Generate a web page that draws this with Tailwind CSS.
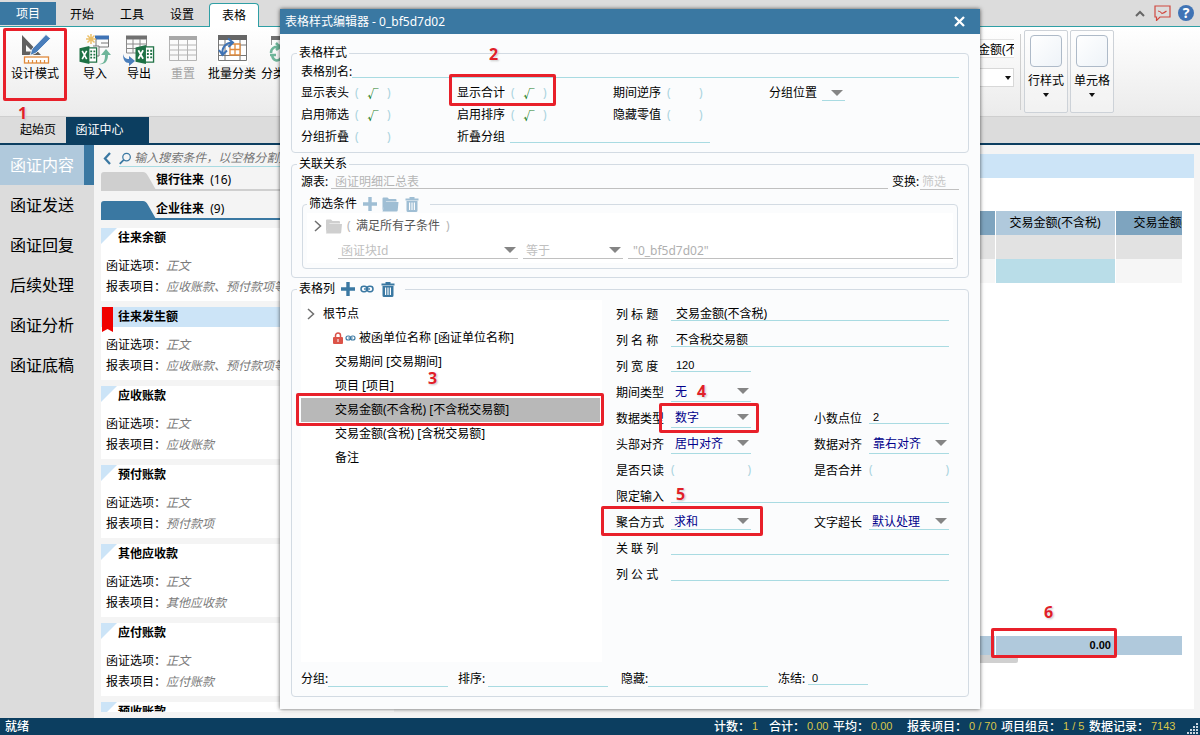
<!DOCTYPE html>
<html lang="zh-CN">
<head>
<meta charset="utf-8">
<title>表格样式编辑器</title>
<script src="https://cdn.jsdelivr.net/npm/@tailwindcss/browser@4"></script>
</head>
<body class="relative flex h-screen flex-col overflow-hidden bg-[#f4f4f4] font-['Noto_Sans','Noto_Sans_CJK_SC',sans-serif] text-xs text-black">
<svg class="hidden" xmlns="http://www.w3.org/2000/svg">
  <symbol id="plus" viewBox="0 0 14 14"><path d="M5.3 0h3.4v5.3H14v3.4H8.700V14H5.300V8.700H0V5.300h5.300z" fill="currentColor"/></symbol>
  <symbol id="folder" viewBox="0 0 16 15"><path d="M0 13.500V1.500Q0 .5 1 .5h4l1.500 1.500h6.500q1 0 1 1v1.500H3.500z M0 14.500 L3 5h13l-.8 8.500q-.1 1-1.200 1z" fill="currentColor"/></symbol>
  <symbol id="trash" viewBox="0 0 14 15"><path d="M4.500 0h5v1.500H13.500v2H.5v-2h4z" fill="currentColor"/><path d="M1.500 4h11v9.500q0 1.500-1.500 1.500H3q-1.500 0-1.500-1.500zM4 5.500v7.500h1.200V5.500zM6.400 5.500v7.500h1.200V5.500zM8.800 5.500v7.500H10V5.500z" fill="currentColor" fill-rule="evenodd"/></symbol>
  <symbol id="link" viewBox="0 0 14 8"><g fill="none" stroke="currentColor" stroke-width="1.500"><rect x="1" y="1.300" width="6" height="5.400" rx="2.700"/><rect x="7" y="1.300" width="6" height="5.400" rx="2.700"/></g><path d="M4 4h6" stroke="currentColor" stroke-width="1.400"/></symbol>
  <symbol id="tri" viewBox="0 0 12 6"><path d="M0 0h12L6 6z" fill="#858585"/></symbol>
  <symbol id="caret" viewBox="0 0 6 4"><path d="M0 0h6L3 4z" fill="#111"/></symbol>
  <symbol id="chev" viewBox="0 0 8 12"><path d="M1 1l5.500 5L1 11" fill="none" stroke="#6f6f6f" stroke-width="1.500"/></symbol>
  <symbol id="excel" viewBox="0 0 20 20"><path d="M9 2h10v16H9z" fill="#fff" stroke="#217346" stroke-width="1.400"/><path d="M12 5h2v2h-2zM15.500 5h2v2h-2zM12 8.500h2v2h-2zM15.500 8.500h2v2h-2zM12 12h2v2h-2zM15.500 12h2v2h-2z" fill="#217346"/><path d="M0 2.500L11 0v20L0 17.500z" fill="#1e7145"/><path d="M3 5.500l5 9M8 5.500l-5 9" stroke="#fff" stroke-width="1.800"/></symbol>
  <symbol id="corner" viewBox="0 0 16 16"><path d="M0 0h16L0 16z" fill="#cce4f7"/></symbol>
</svg>

<!-- Ribbon tabs -->
<header class="shrink-0">
  <div class="flex h-[26px] items-end bg-[#dcdcdc]">
    <button class="mb-px h-[23px] w-14 bg-[#3a78a2] text-white">项目</button>
    <nav class="flex items-end">
      <button class="h-[22px] w-[50px] pl-0.5">开始</button>
      <button class="h-[22px] w-[50px] pl-0.5">工具</button>
      <button class="h-[22px] w-[52px]">设置</button>
      <button class="relative -mb-px ml-px h-6 w-[50px] rounded-t border border-b-0 border-[#2f9fa5] bg-white">表格</button>
    </nav>
    <div class="ml-auto flex h-[26px] items-center gap-[9px] pr-1.5">
      <button aria-label="折叠功能区"><svg width="10" height="7" viewBox="0 0 10 7"><path d="M1 6l4-4 4 4" fill="none" stroke="#666" stroke-width="2"/></svg></button>
      <button aria-label="反馈"><svg width="17" height="16" viewBox="0 0 17 16"><path d="M1 1h15v11H6l-3.500 3.500V12H1z" fill="none" stroke="#d0483f" stroke-width="1.200"/><path d="M4 6q2 0 4 2.500Q10 8 12.500 6" fill="none" stroke="#d0483f" stroke-width="1.200"/></svg></button>
      <button aria-label="帮助" class="-ml-0.5 h-4 w-4 rounded-full bg-[#3f73b5] text-sm leading-4 font-bold text-white">?</button>
    </div>
  </div>
  <!-- Ribbon -->
  <div class="flex h-[91px] border-t border-b border-t-[#2f9fa5] border-b-[#cfcfcf] bg-linear-to-b from-white to-[#ebebeb] pt-[7px] pl-[11px]">
    <div class="flex items-start">
      <button class="flex w-12 flex-col items-center">
        <svg width="32" height="32" viewBox="0 0 32 32"><path d="M3 1v20h19z M7 11l6.500 6.500H7z" fill="#606060" fill-rule="evenodd"/><path d="M27 .5l4.500 4L17 19l-6 2.500L13 15z" fill="#4a7ebb" stroke="#fff" stroke-width=".8"/><rect x="5.500" y="23" width="24" height="6" fill="#fff" stroke="#e08a3c" stroke-width="1.300"/><path d="M9.500 26v3M13.500 26v3M17.500 26v3M21.500 26v3M25.500 26v3" stroke="#e08a3c" stroke-width="1.200"/></svg>
        <span class="leading-4 whitespace-nowrap">设计模式</span>
      </button>
      <button class="ml-3.5 flex w-11 flex-col items-center">
        <svg width="32" height="32" viewBox="0 0 32 32"><path d="M16 1.500h14v4H16z" fill="#3f73b5"/><path d="M17 5v8h12.500V5M22 9h7" fill="none" stroke="#777"/><path d="M12 0v10M7 5h10M8.500 1.500l7 7M15.500 1.500l-7 7" stroke="#ecc069" stroke-width="1.500"/><path d="M14 12h6v10h-6" fill="#fff" stroke="#777"/><use href="#excel" x="0" y="12" width="19" height="18"/><path d="M20 30c5 0 6-4 6-9h-4l5-6 5 6h-3c0 7-4 10-9 9z" fill="#6fb59a"/></svg>
        <span class="leading-4">导入</span>
      </button>
      <button class="flex w-11 flex-col items-center">
        <svg width="32" height="32" viewBox="0 0 32 32"><path d="M3 1.500h21v4H3z" fill="#707070"/><path d="M3.500 5v14h20V5M3 10h20M3 14.500h20M10 5v14M17 5v14" fill="none" stroke="#8a8a8a"/><use href="#excel" x="12" y="11" width="20" height="19"/><path d="M0 20c1 4 3 5 6 5v-3l6 5-6 5v-3c-4 0-6-3-6-9z" fill="#4a7ebb"/></svg>
        <span class="leading-4">导出</span>
      </button>
      <button class="flex w-11 flex-col items-center text-[#a3a3a3]" disabled>
        <svg width="32" height="32" viewBox="0 0 32 32"><path d="M2 2h28v4H2z" fill="#a8a8a8"/><path d="M2.500 6v20.500h27V6M2 11h28M2 16h28M2 21h28M11.500 6v20M20.500 6v20" fill="none" stroke="#b4b4b4"/></svg>
        <span class="leading-4">重置</span>
      </button>
      <button class="ml-0.5 flex w-[50px] flex-col items-center">
        <svg width="32" height="32" viewBox="0 0 32 32"><path d="M1 1h31v30H1z" fill="#fff"/><path d="M2 1h29v5H2z" fill="#666"/><path d="M2.500 6v20.500h28V6M2 11h28M2 21.500h28M9 6v21M24 6v21" fill="none" stroke="#777"/><path d="M14 10h10v11H14zM14 15.500h10M19 10v11" fill="#fff" stroke="#e08a3c" stroke-width="1.300"/><path d="M6.500 20c-1-6 3-11 9-11.500M12 4.500l5 4-4.500 4.500M3 16l3.500 5 4.500-4.500" fill="none" stroke="#3f73b5" stroke-width="2"/></svg>
        <span class="leading-4 whitespace-nowrap">批量分类</span>
      </button>
      <button class="ml-1 flex w-12 flex-col items-center">
        <svg width="32" height="32" viewBox="0 0 32 32"><path d="M2 2h28v4H2z" fill="#707070"/><path d="M2.500 6v5M12.500 26.500h17V6M10 11h20M12 16h18M12 21h18" fill="none" stroke="#999"/><path d="M2 19c0-5 4-7 8-6M7 9l4 4-4 3M1 21h6M3 21c1 6 6 7 9 3" fill="none" stroke="#6fb59a" stroke-width="2.500"/></svg>
        <span class="leading-4 whitespace-nowrap">分类汇总</span>
      </button>
    </div>
    <div class="ml-auto flex items-start pr-[86px]">
      <div class="mt-[5px] flex w-[120px] flex-col gap-2.5">
        <input aria-label="列" value="交易金额(不含税)" class="h-[19px] w-full border-y border-[#e4e4e4] bg-white pl-[60px] text-xs">
        <label class="relative block"><select aria-label="选项" class="h-[19px] w-full appearance-none border border-[#d8d8d8] bg-white"><option></option></select><svg width="6" height="4" class="absolute top-2 right-[3px]"><use href="#caret"/></svg></label>
      </div>
      <div class="mx-1.5 mr-[3px] h-[76px] border-l border-[#cfcfcf]"></div>
      <button class="-mt-1 flex h-[83px] w-11 flex-col items-center rounded-xs border border-[#cdd2d8] bg-white/30 pt-1">
        <span class="h-8 w-8 rounded border border-[#aebac8] bg-linear-to-br from-white to-[#eef3f8]"></span>
        <span class="mt-1.5 leading-4">行样式</span><svg width="6" height="4" class="mt-1"><use href="#caret"/></svg>
      </button>
      <button class="-mt-1 ml-0.5 flex h-[83px] w-11 flex-col items-center rounded-xs border border-[#cdd2d8] bg-white/30 pt-1">
        <span class="h-8 w-8 rounded border border-[#aebac8] bg-linear-to-br from-white to-[#eef3f8]"></span>
        <span class="mt-1.5 leading-4">单元格</span><svg width="6" height="4" class="mt-1"><use href="#caret"/></svg>
      </button>
    </div>
  </div>
  <!-- Document tabs -->
  <div class="flex h-7 border-b-2 border-[#0c3e60] bg-[#dcdcdc]">
    <button class="w-[66px] pl-2.5">起始页</button>
    <button class="w-[83px] bg-[#0c3e60] pr-4 text-white">函证中心</button>
  </div>
</header>

<!-- Workspace -->
<div class="flex min-h-0 flex-1">
  <nav class="flex w-[94px] shrink-0 flex-col bg-[#dcdcdc] text-base">
    <a href="#" class="flex h-10 items-center border-r-[10px] border-[#3a78a2] bg-[#b0c9dc] pl-2.5 text-white">函证内容</a>
    <a href="#" class="flex h-10 items-center pl-2.5">函证发送</a>
    <a href="#" class="flex h-10 items-center pl-2.5">函证回复</a>
    <a href="#" class="flex h-10 items-center pl-2.5">后续处理</a>
    <a href="#" class="flex h-10 items-center pl-2.5">函证分析</a>
    <a href="#" class="flex h-10 items-center pl-2.5">函证底稿</a>
  </nav>

  <aside class="mb-1.5 flex w-[300px] shrink-0 flex-col overflow-hidden pl-[7px]">
    <div class="flex h-[27px] shrink-0 items-center gap-2">
      <button aria-label="返回" class="ml-0.5"><svg width="8" height="13" viewBox="0 0 8 13"><path d="M7 1L2 6.500 7 12" fill="none" stroke="#3a78a2" stroke-width="2.300"/></svg></button>
      <div class="flex h-[17px] flex-1 items-center gap-[3px] border-b border-[#a9dbe2]">
        <svg width="13" height="13" viewBox="0 0 13 13"><circle cx="8" cy="5" r="4" fill="none" stroke="#3a78a2" stroke-width="1.300"/><path d="M5 8L.8 12.200" stroke="#3a78a2" stroke-width="1.800"/></svg>
        <input type="search" aria-label="搜索" placeholder="输入搜索条件，以空格分割多个条件" class="w-full min-w-0 bg-transparent leading-4 italic placeholder:text-[#757575]">
      </div>
    </div>
    <button class="flex h-[19px] shrink-0 items-stretch border-b-2 border-[#cfcfcf] text-left">
      <svg width="55" height="18" viewBox="0 0 55 18"><path d="M0 18V3q0-3 3-3h39q3 0 5 4l8 14z" fill="#cfcfcf"/></svg><span><b>银行往来</b>&nbsp; (16)</span>
    </button>
    <button class="mt-2.5 flex h-[19px] shrink-0 items-stretch border-b-2 border-[#3a78a2] text-left">
      <svg width="55" height="18" viewBox="0 0 55 18"><path d="M0 18V3q0-3 3-3h39q3 0 5 4l8 14z" fill="#3a78a2"/></svg><span><b>企业往来</b>&nbsp; (9)</span>
    </button>
    <div class="mt-2 flex flex-col gap-1.5">
      <article class="h-[73px] shrink-0 bg-white"><h3 class="flex h-5 items-start gap-px font-bold"><svg width="16" height="16"><use href="#corner"/></svg><span class="leading-5">往来余额</span></h3><div class="mt-[7px] pl-[5px] leading-[21px] whitespace-nowrap"><p>函证选项：<i class="text-[#7a7a7a]">正文</i></p><p>报表项目：<i class="text-[#7a7a7a]">应收账款、预付款项等</i></p></div></article>
      <article class="h-[73px] shrink-0 bg-white"><h3 class="flex h-5 items-start gap-1.5 bg-[#cce4f7] pl-px font-bold"><svg width="10" height="26" class="shrink-0 overflow-visible" viewBox="0 0 10 26"><path d="M0 0h11v25l-5.500-3L0 25z" fill="#f00000"/></svg><span class="leading-5">往来发生额</span></h3><div class="mt-[7px] pl-[5px] leading-[21px] whitespace-nowrap"><p>函证选项：<i class="text-[#7a7a7a]">正文</i></p><p>报表项目：<i class="text-[#7a7a7a]">应收账款、预付款项等</i></p></div></article>
      <article class="h-[73px] shrink-0 bg-white"><h3 class="flex h-5 items-start gap-px font-bold"><svg width="16" height="16"><use href="#corner"/></svg><span class="leading-5">应收账款</span></h3><div class="mt-[7px] pl-[5px] leading-[21px] whitespace-nowrap"><p>函证选项：<i class="text-[#7a7a7a]">正文</i></p><p>报表项目：<i class="text-[#7a7a7a]">应收账款</i></p></div></article>
      <article class="h-[73px] shrink-0 bg-white"><h3 class="flex h-5 items-start gap-px font-bold"><svg width="16" height="16"><use href="#corner"/></svg><span class="leading-5">预付账款</span></h3><div class="mt-[7px] pl-[5px] leading-[21px] whitespace-nowrap"><p>函证选项：<i class="text-[#7a7a7a]">正文</i></p><p>报表项目：<i class="text-[#7a7a7a]">预付款项</i></p></div></article>
      <article class="h-[73px] shrink-0 bg-white"><h3 class="flex h-5 items-start gap-px font-bold"><svg width="16" height="16"><use href="#corner"/></svg><span class="leading-5">其他应收款</span></h3><div class="mt-[7px] pl-[5px] leading-[21px] whitespace-nowrap"><p>函证选项：<i class="text-[#7a7a7a]">正文</i></p><p>报表项目：<i class="text-[#7a7a7a]">其他应收款</i></p></div></article>
      <article class="h-[73px] shrink-0 bg-white"><h3 class="flex h-5 items-start gap-px font-bold"><svg width="16" height="16"><use href="#corner"/></svg><span class="leading-5">应付账款</span></h3><div class="mt-[7px] pl-[5px] leading-[21px] whitespace-nowrap"><p>函证选项：<i class="text-[#7a7a7a]">正文</i></p><p>报表项目：<i class="text-[#7a7a7a]">应付账款</i></p></div></article>
      <article class="h-[73px] shrink-0 bg-white"><h3 class="flex h-5 items-start gap-px font-bold"><svg width="16" height="16"><use href="#corner"/></svg><span class="leading-5">预收账款</span></h3></article>
    </div>
  </aside>

  <main class="mt-[9px] mr-1.5 mb-[9px] flex min-w-0 flex-1 flex-col bg-white">
    <div class="h-6 shrink-0 bg-[#cce4f7]"></div>
    <div class="flex flex-1 flex-col pt-[33px] pr-3 pb-[46px]">
      <table class="w-full table-fixed border-collapse">
        <thead><tr class="h-6 bg-[#7ea4bf]"><th></th><th class="w-[120px] border-x border-white bg-[#b0c9dc] font-normal">交易金额(不含税)</th><th class="w-[67px] overflow-hidden pl-[18px] text-left font-normal whitespace-nowrap">交易金额(含税)</th></tr></thead>
        <tbody>
          <tr class="h-6 bg-[#e2e2e2]"><td></td><td class="border-x border-white"></td><td></td></tr>
          <tr class="h-6 bg-[#f6f6f6]"><td></td><td class="border-x border-white bg-[#b9dde8]"></td><td></td></tr>
        </tbody>
      </table>
      <table class="mt-auto w-full table-fixed border-collapse">
        <tbody><tr class="h-[19px] bg-[#b0c9dc]"><td></td><td class="w-[120px] border-l border-white pr-1 text-right font-['Liberation_Sans',sans-serif] text-[11px] leading-[19px] font-bold">0.00</td><td class="w-[67px]"></td></tr></tbody>
      </table>
      <div class="mr-[164px] h-2 shrink-0 rounded-r-xs bg-[#d0d0d0]"></div>
    </div>
  </main>
</div>

<!-- Status bar -->
<footer class="flex h-[17px] shrink-0 items-center bg-[#0c3e60] pr-0.5 pl-[5px] font-medium whitespace-nowrap text-white">
  <span>就绪</span>
  <dl class="ml-auto flex items-center">
    <dt class="w-[38px]">计数：</dt><dd class="w-[17px] font-['Liberation_Sans',sans-serif] text-[11px] font-normal text-[#d9c64a]">1</dd>
    <dt class="w-[38px]">合计：</dt><dd class="w-[26px] font-['Liberation_Sans',sans-serif] text-[11px] font-normal text-[#d9c64a]">0.00</dd>
    <dt class="w-[38px]">平均：</dt><dd class="w-9 font-['Liberation_Sans',sans-serif] text-[11px] font-normal text-[#d9c64a]">0.00</dd>
    <dt class="w-[62px]">报表项目：</dt><dd class="w-8 font-['Liberation_Sans',sans-serif] text-[11px] font-normal text-[#d9c64a]">0 / 70</dd>
    <dt class="w-[62px]">项目组员：</dt><dd class="w-[26px] font-['Liberation_Sans',sans-serif] text-[11px] font-normal text-[#d9c64a]">1 / 5</dd>
    <dt class="w-[62px]">数据记录：</dt><dd class="w-9 font-['Liberation_Sans',sans-serif] text-[11px] font-normal text-[#d9c64a]">7143</dd>
  </dl>
  <svg width="11" height="11" viewBox="0 0 11 11" class="mt-1"><path d="M9 0h2v2H9zM6 3h2v2H6zM9 3h2v2H9zM3 6h2v2H3zM6 6h2v2H6zM9 6h2v2H9zM0 9h2v2H0zM3 9h2v2H3zM6 9h2v2H6zM9 9h2v2H9z" fill="#c9d6e0"/></svg>
</footer>

<!-- Style editor window -->
<section role="dialog" aria-label="表格样式编辑器" class="absolute top-[9px] right-[220px] bottom-[26px] left-[280px] flex flex-col bg-[#fbfcfd] shadow-[0_0_4px_rgba(0,0,0,0.65)]">
  <div class="flex h-[25px] shrink-0 items-center justify-between bg-[#3a78a2] pr-[15px] pl-[5px] text-white">
    <h2>表格样式编辑器 - 0_bf5d7d02</h2>
    <button aria-label="关闭"><svg width="11" height="11" viewBox="0 0 11 11"><path d="M1 1l9 9M10 1l-9 9" stroke="#fff" stroke-width="2.300"/></svg></button>
  </div>
  <form class="flex min-h-0 flex-1 flex-col px-[11px] pt-[11px] pb-3 whitespace-nowrap">
    <fieldset class="min-w-0 shrink-0 rounded-sm border border-[#d3dbe3] px-[9px] pb-1">
      <legend class="-ml-1 px-0.5 leading-4">表格样式</legend>
      <div class="flex h-[21px] items-center"><label for="alias" class="w-[51px]">表格别名:</label><input id="alias" class="h-3 min-w-0 flex-1 border-b border-[#a9dbe2] bg-transparent"></div>
      <div class="grid auto-rows-[22px] grid-cols-[156px_156px_156px_1fr] items-center">
        <label class="flex items-center"><span class="w-[54px]">显示表头</span><span class="w-1 text-[#a9d3dd]">(</span><input type="checkbox" checked class="flex h-4 w-7 appearance-none items-center justify-center font-['Noto_Sans_CJK_SC',sans-serif] text-[11px] text-[#1d7f1d] checked:before:font-bold checked:before:content-['√']"><span class="w-1 text-[#a9d3dd]">)</span></label>
        <label class="flex items-center"><span class="w-[54px]">显示合计</span><span class="w-1 text-[#a9d3dd]">(</span><input type="checkbox" checked class="flex h-4 w-7 appearance-none items-center justify-center font-['Noto_Sans_CJK_SC',sans-serif] text-[11px] text-[#1d7f1d] checked:before:font-bold checked:before:content-['√']"><span class="w-1 text-[#a9d3dd]">)</span></label>
        <label class="flex items-center"><span class="w-[54px]">期间逆序</span><span class="w-1 text-[#a9d3dd]">(</span><input type="checkbox" class="flex h-4 w-7 appearance-none items-center justify-center text-[#1d7f1d] checked:before:content-['√']"><span class="w-1 text-[#a9d3dd]">)</span></label>
        <label class="flex items-center"><span class="w-[53px]">分组位置</span><span class="relative"><select class="block h-4 w-[23px] appearance-none border-b border-[#a9dbe2]"><option></option></select><svg width="12" height="6" class="pointer-events-none absolute top-[5px] right-0.5"><use href="#tri"/></svg></span></label>
        <label class="flex items-center"><span class="w-[54px]">启用筛选</span><span class="w-1 text-[#a9d3dd]">(</span><input type="checkbox" checked class="flex h-4 w-7 appearance-none items-center justify-center font-['Noto_Sans_CJK_SC',sans-serif] text-[11px] text-[#1d7f1d] checked:before:font-bold checked:before:content-['√']"><span class="w-1 text-[#a9d3dd]">)</span></label>
        <label class="flex items-center"><span class="w-[54px]">启用排序</span><span class="w-1 text-[#a9d3dd]">(</span><input type="checkbox" checked class="flex h-4 w-7 appearance-none items-center justify-center font-['Noto_Sans_CJK_SC',sans-serif] text-[11px] text-[#1d7f1d] checked:before:font-bold checked:before:content-['√']"><span class="w-1 text-[#a9d3dd]">)</span></label>
        <label class="col-span-2 flex items-center"><span class="w-[54px]">隐藏零值</span><span class="w-1 text-[#a9d3dd]">(</span><input type="checkbox" class="flex h-4 w-7 appearance-none items-center justify-center text-[#1d7f1d] checked:before:content-['√']"><span class="w-1 text-[#a9d3dd]">)</span></label>
        <label class="flex items-center"><span class="w-[54px]">分组折叠</span><span class="w-1 text-[#a9d3dd]">(</span><input type="checkbox" class="flex h-4 w-7 appearance-none items-center justify-center text-[#1d7f1d] checked:before:content-['√']"><span class="w-1 text-[#a9d3dd]">)</span></label>
        <label class="col-span-3 flex items-center"><span class="w-[53px]">折叠分组</span><input class="h-3 w-[200px] border-b border-[#a9dbe2] bg-transparent"></label>
      </div>
    </fieldset>

    <fieldset class="mt-[3px] min-w-0 shrink-0 rounded-sm border border-[#d3dbe3] px-[9px] pb-2">
      <legend class="-ml-1 px-0.5 leading-4">关联关系</legend>
      <div class="flex h-5 items-center">
        <label for="src" class="w-[30px]">源表:</label><input id="src" value="函证明细汇总表" class="h-[14px] min-w-0 flex-1 border-b border-[#c0c0c0] bg-transparent pl-1 text-[#b5b5b5]">
        <label for="trans" class="ml-1 w-7">变换:</label><input id="trans" value="筛选" class="h-4 w-[39px] border-b border-[#c0c0c0] bg-transparent pl-0.5 text-[#c8c8c8]">
      </div>
      <fieldset class="mt-[3px] mr-px ml-px min-w-0 rounded-sm border border-[#d3dbe3] px-1 pb-[5px]">
        <legend class="flex h-[18px] items-center pr-[11px] pl-0.5"><span class="w-[54px]">筛选条件</span>
          <button type="button" aria-label="添加条件" class="text-[#9fbed4]"><svg width="14" height="14"><use href="#plus"/></svg></button>
          <button type="button" aria-label="添加条件组" class="ml-[5px] text-[#9fbed4]"><svg width="17" height="15"><use href="#folder"/></svg></button>
          <button type="button" aria-label="删除条件" class="ml-1.5 text-[#9fbed4]"><svg width="14" height="15"><use href="#trash"/></svg></button>
        </legend>
        <div class="bg-white">
          <div class="flex h-[26px] items-center pl-[7px]"><svg width="8" height="12"><use href="#chev"/></svg><svg width="16" height="15" class="ml-1 text-[#cfcfcf]"><use href="#folder"/></svg><span class="ml-[5px] w-[9px] text-[#b5b5b5]">(</span><span class="text-[#555]">满足所有子条件</span><span class="ml-1.5 text-[#b5b5b5]">)</span></div>
          <div class="flex h-6 items-center gap-[5px] pl-[31px] text-[#c0c0c0]">
            <span class="relative"><select aria-label="字段" class="block h-4 w-[180px] appearance-none border-b border-[#c0c0c0] pl-[3px]"><option>函证块Id</option></select><svg width="12" height="6" class="pointer-events-none absolute top-1 right-0.5"><use href="#tri"/></svg></span>
            <span class="relative"><select aria-label="运算" class="block h-4 w-[100px] appearance-none border-b border-[#c0c0c0] pl-[3px]"><option>等于</option></select><svg width="12" height="6" class="pointer-events-none absolute top-1 right-0.5"><use href="#tri"/></svg></span>
            <input aria-label="值" value='"0_bf5d7d02"' class="h-4 min-w-0 flex-1 border-b border-[#c0c0c0] bg-transparent pl-[5px] text-[#b0b0b0]">
          </div>
        </div>
      </fieldset>
    </fieldset>

    <fieldset class="mt-px flex min-h-0 min-w-0 flex-1 flex-col rounded-sm border border-[#d3dbe3] px-[9px]">
      <legend class="-ml-1 flex h-5 items-center pr-2.5 pl-0.5"><span class="w-[42px]">表格列</span>
        <button type="button" aria-label="添加列" class="text-[#3a78a2]"><svg width="14" height="14"><use href="#plus"/></svg></button>
        <button type="button" aria-label="关联列" class="ml-[5px] text-[#3a78a2]"><svg width="14" height="8"><use href="#link"/></svg></button>
        <button type="button" aria-label="删除列" class="ml-[7px] text-[#3a78a2]"><svg width="14" height="15"><use href="#trash"/></svg></button>
      </legend>
      <div class="mt-px flex min-h-0 flex-1 gap-[14px]">
        <ul class="w-[301px] shrink-0 bg-white pt-0.5 [&>li]:flex [&>li]:h-6 [&>li]:items-center">
          <li class="gap-2 pl-1.5"><svg width="8" height="12"><use href="#chev"/></svg>根节点</li>
          <li class="pl-8"><svg width="10" height="12" viewBox="0 0 10 12" class="mr-0.5"><path d="M2.500 5V3.500a2.500 2.500 0 015 0V5" fill="none" stroke="#d9534a" stroke-width="1.500"/><rect y="5" width="10" height="7" rx="1" fill="#dc5348"/><path d="M5 7v3" stroke="#fff"/></svg><svg width="11" height="6" class="mr-[3px] text-[#3a78a2]"><use href="#link"/></svg>被函单位名称 [函证单位名称]</li>
          <li class="pl-[34px]">交易期间 [交易期间]</li>
          <li class="pl-[34px]">项目 [项目]</li>
          <li class="mr-0.5 bg-[#b8b8b8] pl-[34px]">交易金额(不含税) [不含税交易额]</li>
          <li class="pl-[34px]">交易金额(含税) [含税交易额]</li>
          <li class="pl-[34px]">备注</li>
        </ul>
        <div class="grid min-w-0 flex-1 auto-rows-[26px] grid-cols-[55px_80px_63px_55px_1fr] content-start items-center pt-px pr-2.5 [&_label]:pt-0.5">
          <label for="f1">列 标 题</label><input id="f1" value="交易金额(不含税)" class="col-span-4 h-[14px] border-b border-[#a9dbe2] bg-transparent pl-[5px]">
          <label for="f2">列 名 称</label><input id="f2" value="不含税交易额" class="col-span-4 h-[14px] border-b border-[#a9dbe2] bg-transparent pl-[5px]">
          <label for="f3">列 宽 度</label><input id="f3" value="120" class="h-3 w-20 border-b border-[#a9dbe2] bg-transparent pl-[5px] font-['Liberation_Sans',sans-serif] text-[11px]"><i class="col-span-3"></i>
          <label for="f4">期间类型</label><span class="relative"><select id="f4" class="block h-5 w-20 appearance-none border-b border-[#a9dbe2] pl-1 text-[#00008b]"><option>无</option></select><svg width="12" height="6" class="pointer-events-none absolute top-1.5 right-0.5"><use href="#tri"/></svg></span><i class="col-span-3"></i>
          <label for="f5">数据类型</label><span class="relative"><select id="f5" class="block h-5 w-20 appearance-none border-b border-[#a9dbe2] pl-1 text-[#00008b]"><option>数字</option></select><svg width="12" height="6" class="pointer-events-none absolute top-1.5 right-0.5"><use href="#tri"/></svg></span><i></i>
          <label for="f6">小数点位</label><input id="f6" value="2" class="h-3 min-w-0 border-b border-[#a9dbe2] bg-transparent pl-1 font-['Liberation_Sans',sans-serif] text-[11px]">
          <label for="f7">头部对齐</label><span class="relative"><select id="f7" class="block h-5 w-20 appearance-none border-b border-[#a9dbe2] pl-1 text-[#00008b]"><option>居中对齐</option></select><svg width="12" height="6" class="pointer-events-none absolute top-1.5 right-0.5"><use href="#tri"/></svg></span><i></i>
          <label for="f8">数据对齐</label><span class="relative"><select id="f8" class="block h-5 w-full appearance-none border-b border-[#a9dbe2] pl-1 text-[#00008b]"><option>靠右对齐</option></select><svg width="12" height="6" class="pointer-events-none absolute top-1.5 right-0.5"><use href="#tri"/></svg></span>
          <label for="f9">是否只读</label><span class="flex items-center justify-between text-[#a9d3dd]">(<input id="f9" type="checkbox" class="h-4 flex-1 appearance-none">)</span><i></i>
          <label for="f10">是否合并</label><span class="flex items-center justify-between text-[#a9d3dd]">(<input id="f10" type="checkbox" class="h-4 flex-1 appearance-none">)</span>
          <label for="f11">限定输入</label><input id="f11" class="col-span-4 h-[14px] border-b border-[#a9dbe2] bg-transparent">
          <label for="f12">聚合方式</label><span class="relative"><select id="f12" class="block h-4 w-20 appearance-none border-b border-[#a9dbe2] pl-[3px] text-[#00008b]"><option>求和</option></select><svg width="12" height="6" class="pointer-events-none absolute top-1 right-0.5"><use href="#tri"/></svg></span><i></i>
          <label for="f13">文字超长</label><span class="relative"><select id="f13" class="block h-4 w-full appearance-none border-b border-[#a9dbe2] pl-[3px] text-[#00008b]"><option>默认处理</option></select><svg width="12" height="6" class="pointer-events-none absolute top-1 right-0.5"><use href="#tri"/></svg></span>
          <label for="f14">关 联 列</label><input id="f14" class="col-span-4 h-[14px] border-b border-[#a9dbe2] bg-transparent">
          <label for="f15">列 公 式</label><input id="f15" class="col-span-4 h-[14px] border-b border-[#a9dbe2] bg-transparent">
        </div>
      </div>
      <div class="flex h-[34px] shrink-0 items-center">
        <label for="g1" class="w-[27px]">分组:</label><input id="g1" class="h-4 w-[120px] border-b border-[#a9dbe2] bg-transparent">
        <label for="g2" class="ml-2.5 w-[30px]">排序:</label><input id="g2" class="h-4 w-[120px] border-b border-[#a9dbe2] bg-transparent">
        <label for="g3" class="ml-[13px] w-[27px]">隐藏:</label><input id="g3" class="h-4 w-[120px] border-b border-[#a9dbe2] bg-transparent">
        <label for="g4" class="ml-2.5 w-[30px]">冻结:</label><input id="g4" value="0" class="h-3 w-[60px] border-b border-[#a9dbe2] bg-transparent pl-1 font-['Liberation_Sans',sans-serif] text-[11px]">
      </div>
    </fieldset>
  </form>
</section>

<!-- Step markers drawn over the window -->
<div class="pointer-events-none absolute inset-0 text-base leading-5 font-bold text-[#e02028] [text-shadow:0_0_2px_#fff,1px_1px_2px_#bbb]">
  <div class="absolute top-7 left-[3px] h-[73px] w-16 rounded-xs border-3 border-[#e8202a]"></div><span class="absolute top-[103px] left-[18px]">1</span>
  <div class="absolute top-[74px] left-[449px] h-8 w-[107px] rounded-xs border-3 border-[#e8202a]"></div><span class="absolute top-11 left-[489px]">2</span>
  <div class="absolute top-[393px] left-[296px] h-[33px] w-[308px] rounded-xs border-3 border-[#e8202a]"></div><span class="absolute top-[368px] left-[428px]">3</span>
  <div class="absolute top-[403px] left-[659px] h-[30px] w-[100px] rounded-xs border-3 border-[#e8202a]"></div><span class="absolute top-[381px] left-[697px]">4</span>
  <div class="absolute top-[506px] left-[601px] h-[30px] w-[162px] rounded-xs border-3 border-[#e8202a]"></div><span class="absolute top-[484px] left-[676px]">5</span>
  <div class="absolute top-[628px] left-[991px] h-[30px] w-[126px] rounded-xs border-3 border-[#e8202a]"></div><span class="absolute top-[602px] left-[1044px]">6</span>
</div>
</body>
</html>
